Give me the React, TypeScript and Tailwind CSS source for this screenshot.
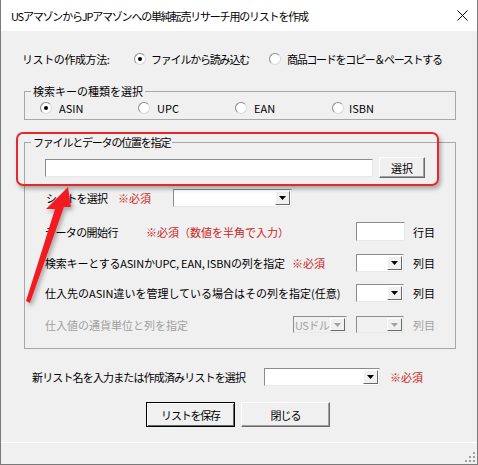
import React from "react";

function Radio({ checked = false }: { checked?: boolean }) {
  return (
    <span className="flex h-[12px] w-[12px] shrink-0 items-center justify-center rounded-full border border-t-[#8a8a8a] border-l-[#8a8a8a] border-b-[#d8d8d8] border-r-[#d8d8d8] bg-white">
      {checked && <span className="h-[4px] w-[4px] rounded-full bg-black" />}
    </span>
  );
}

function Sunken({ className = "" }: { className?: string }) {
  return (
    <div
      className={`border border-t-[#8c8c8c] border-l-[#8c8c8c] border-b-[#e8e8e8] border-r-[#e8e8e8] bg-white ${className}`}
    />
  );
}

function Combo({
  className = "",
  disabled = false,
  text,
}: {
  className?: string;
  disabled?: boolean;
  text?: string;
}) {
  return (
    <div
      className={`flex shrink-0 border border-t-[#8c8c8c] border-l-[#8c8c8c] border-b-[#e8e8e8] border-r-[#e8e8e8] ${
        disabled ? "bg-[#f0f0f0] text-[#a0a0a0]" : "bg-white"
      } ${className}`}
    >
      <span className="flex flex-1 items-center overflow-hidden whitespace-nowrap pl-[1px] tracking-[-0.5px]">
        {text}
      </span>
      <span className="my-[1px] mr-[1px] flex w-[15px] items-center justify-center border border-t-white border-l-white border-b-[#696969] border-r-[#696969] bg-[#f0f0f0]">
        <svg width="7" height="4" viewBox="0 0 7 4">
          <path d="M0 0h7L3.5 4z" fill={disabled ? "#a0a0a0" : "#000"} />
        </svg>
      </span>
    </div>
  );
}

function Btn({
  label,
  className = "",
  primary = false,
}: {
  label: string;
  className?: string;
  primary?: boolean;
}) {
  if (primary) {
    return (
      <div
        className={`flex items-center justify-center border border-black bg-[#f0f0f0] shadow-[inset_1px_1px_0_#fff,inset_-1px_-1px_0_#696969] ${className}`}
      >
        {label}
      </div>
    );
  }
  return (
    <div
      className={`flex items-center justify-center border border-t-white border-l-white border-b-[#696969] border-r-[#696969] bg-[#f0f0f0] shadow-[inset_-1px_-1px_0_#a0a0a0] ${className}`}
    >
      {label}
    </div>
  );
}

export default function App() {
  return (
    <div className="relative flex h-[465px] w-[478px] flex-col overflow-hidden border-x border-b border-[#7a7a7a] bg-[#f0f0f0] font-['Noto_Sans_CJK_JP',sans-serif] text-[11px] leading-[14px] text-black">
      {/* title bar */}
      <div className="flex h-[31px] shrink-0 items-center justify-between bg-white pl-[10px] pr-[9px]">
        <span className="whitespace-nowrap tracking-[-1.2px]">
          USアマゾンからJPアマゾンへの単純転売リサーチ用のリストを作成
        </span>
        <svg width="11" height="11" viewBox="0 0 11 11">
          <path d="M0.5 0.5l10 10M10.5 0.5l-10 10" stroke="#000" strokeWidth="1" />
        </svg>
      </div>

      {/* list creation method */}
      <div className="mt-[20px] flex h-[16px] items-center pl-[21px]">
        <span className="w-[112px] tracking-[-0.4px]">リストの作成方法:</span>
        <span className="flex w-[135px] items-center gap-[5px]">
          <Radio checked />
          <span className="tracking-[-1.2px]">ファイルから読み込む</span>
        </span>
        <span className="flex items-center gap-[6px]">
          <Radio />
          <span className="whitespace-nowrap tracking-[-1.3px]">商品コードをコピー＆ペーストする</span>
        </span>
      </div>

      {/* search key type */}
      <fieldset className="mt-[17px] ml-[23px] w-[432px] border border-[#a8a8a8] pb-[4px]">
        <legend className="ml-[6px] px-[2px]">検索キーの種類を選択</legend>
        <div className="mt-[3px] flex h-[14px] items-center pl-[15px]">
          <span className="flex w-[98px] items-center gap-[7px]">
            <Radio checked />
            <span>ASIN</span>
          </span>
          <span className="flex w-[97px] items-center gap-[7px]">
            <Radio />
            <span>UPC</span>
          </span>
          <span className="flex w-[97px] items-center gap-[7px]">
            <Radio />
            <span>EAN</span>
          </span>
          <span className="flex items-center gap-[5px]">
            <Radio />
            <span>ISBN</span>
          </span>
        </div>
      </fieldset>

      {/* file & data position */}
      <fieldset className="mt-[15px] ml-[23px] w-[432px] border border-[#a8a8a8] pb-[15px]">
        <legend className="ml-[6px] px-[2px] tracking-[-1.2px]">ファイルとデータの位置を指定</legend>
        <div className="mt-[8px] flex h-[21px] items-center pl-[20px]">
          <Sunken className="h-[18px] w-[328px]" />
          <Btn label="選択" className="ml-[6px] h-[21px] w-[46px]" />
        </div>

        <div className="mt-[11px] flex h-[18px] items-center pl-[20px]">
          <span className="w-[73px] pl-[1px] tracking-[-0.8px]">シートを選択</span>
          <span className="w-[55px] text-[#cc1f1f]">※必須</span>
          <Combo className="h-[18px] w-[119px]" />
        </div>

        <div className="mt-[15px] flex h-[19px] items-center pl-[20px]">
          <span className="w-[101px] tracking-[-0.6px]">データの開始行</span>
          <span className="w-[210px] text-[#cc1f1f]">※必須（数値を半角で入力）</span>
          <Sunken className="h-[19px] w-[49px]" />
          <span className="ml-[8px]">行目</span>
        </div>

        <div className="mt-[13px] flex h-[18px] items-center pl-[20px]">
          <span className="w-[247px] shrink-0 whitespace-nowrap tracking-[-0.2px]">検索キーとするASINかUPC, EAN, ISBNの列を指定</span>
          <span className="w-[64px] shrink-0 text-[#cc1f1f]">※必須</span>
          <Combo className="h-[18px] w-[48px]" />
          <span className="ml-[9px]">列目</span>
        </div>

        <div className="mt-[12px] flex h-[18px] items-center pl-[20px]">
          <span className="w-[311px] shrink-0 whitespace-nowrap">仕入先のASIN違いを管理している場合はその列を指定(任意)</span>
          <Combo className="h-[18px] w-[48px]" />
          <span className="ml-[9px]">列目</span>
        </div>

        <div className="mt-[14px] flex h-[17px] items-center pl-[20px] text-[#a0a0a0]">
          <span className="w-[248px]">仕入値の通貨単位と列を指定</span>
          <Combo disabled text="USドル" className="h-[17px] w-[54px]" />
          <Combo disabled className="ml-[9px] h-[17px] w-[48px]" />
          <span className="ml-[9px]">列目</span>
        </div>
      </fieldset>

      {/* new list name */}
      <div className="mt-[19px] flex h-[18px] items-center pl-[31px]">
        <span className="w-[232px] shrink-0 whitespace-nowrap tracking-[-0.85px]">新リスト名を入力または作成済みリストを選択</span>
        <Combo className="h-[18px] w-[116px]" />
        <span className="ml-[10px] text-[#cc1f1f]">※必須</span>
      </div>

      {/* buttons */}
      <div className="mt-[16px] flex h-[25px] items-center gap-[6px] pl-[145px]">
        <Btn primary label="リストを保存" className="h-[25px] w-[89px] tracking-[-1.2px]" />
        <Btn label="閉じる" className="h-[25px] w-[89px] tracking-[-1px]" />
      </div>

      {/* status bar with size grip */}
      <div className="mt-auto flex h-[22px] shrink-0 items-end justify-end border-t border-white pr-[1px] pb-[1px]">
        <svg width="12" height="12" viewBox="0 0 12 12">
          <rect x="9" y="1" width="2" height="2" fill="#a0a0a0" />
          <rect x="5" y="5" width="2" height="2" fill="#a0a0a0" />
          <rect x="9" y="5" width="2" height="2" fill="#a0a0a0" />
          <rect x="1" y="9" width="2" height="2" fill="#a0a0a0" />
          <rect x="5" y="9" width="2" height="2" fill="#a0a0a0" />
          <rect x="9" y="9" width="2" height="2" fill="#a0a0a0" />
        </svg>
      </div>

      {/* red highlight annotation */}
      <div className="pointer-events-none absolute left-[15px] top-[132px] h-[54px] w-[423px] rounded-[7px] border-[2px] border-[#e8262b] shadow-[2px_3px_4px_rgba(0,0,0,0.3)]" />

      {/* red arrow annotation */}
      <svg
        className="pointer-events-none absolute left-0 top-0"
        width="478"
        height="465"
        viewBox="0 0 478 465"
      >
        <defs>
          <filter id="arrowShadow" x="-50%" y="-50%" width="200%" height="200%">
            <feDropShadow dx="2" dy="3" stdDeviation="2" floodColor="#000" floodOpacity="0.3" />
          </filter>
        </defs>
        <polygon
          points="67,187 70,207 63,207 29,303 25,301 54,209 45,209"
          fill="#f01e23"
          filter="url(#arrowShadow)"
        />
      </svg>
    </div>
  );
}
